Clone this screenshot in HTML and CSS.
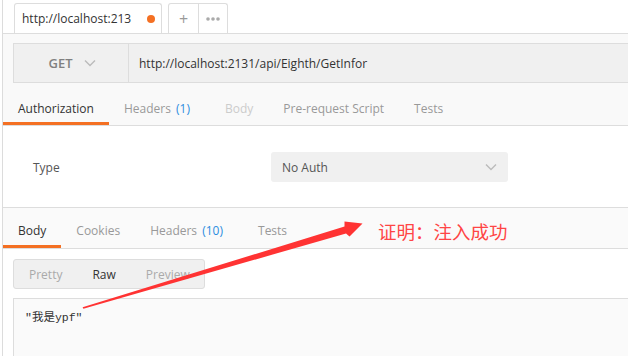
FILE: index.html
```html
<!DOCTYPE html>
<html lang="zh">
<head>
    <meta charset="UTF-8">
    <title>Postman</title>
    <link rel="stylesheet" href="styles.css">
</head>
<body>
    <div class="app">
        <div class="tabstrip">
            <div class="tab">
                <span class="tab-title">http://localhost:213</span>
                <span class="dot"></span>
            </div>
            <div class="tab-tools">
                <span class="tool">+</span>
                <span class="tool dots">
                    <svg width="14" height="4" viewBox="0 0 14 4"><circle cx="2" cy="2" r="1.8" fill="#aaa"/><circle cx="7" cy="2" r="1.8" fill="#aaa"/><circle cx="12" cy="2" r="1.8" fill="#aaa"/></svg>
                </span>
            </div>
        </div>

        <div class="request">
            <div class="urlbar">
                <div class="method">
                    GET
                    <svg width="12" height="8" viewBox="0 0 12 8"><path d="M1 1.5 L6 6.5 L11 1.5" fill="none" stroke="#bbb" stroke-width="1.4"/></svg>
                </div>
                <div class="url">http://localhost:2131/api/Eighth/GetInfor</div>
            </div>
        </div>

        <div class="tabs">
            <div class="tab-item active">Authorization</div>
            <div class="tab-item">Headers <span class="count">(1)</span></div>
            <div class="tab-item disabled">Body</div>
            <div class="tab-item">Pre-request Script</div>
            <div class="tab-item">Tests</div>
        </div>

        <div class="auth">
            <div class="auth-label">Type</div>
            <div class="select">
                <span>No Auth</span>
                <svg width="12" height="8" viewBox="0 0 12 8"><path d="M1 1.5 L6 6.5 L11 1.5" fill="none" stroke="#bbb" stroke-width="1.4"/></svg>
            </div>
        </div>

        <div class="tabs response-tabs">
            <div class="tab-item active">Body</div>
            <div class="tab-item">Cookies</div>
            <div class="tab-item">Headers <span class="count">(10)</span></div>
            <div class="tab-item">Tests</div>
        </div>

        <div class="view-switch">
            <span class="view">Pretty</span>
            <span class="view current">Raw</span>
            <span class="view">Preview</span>
        </div>

        <div class="response">"我是ypf"</div>
    </div>

    <!-- annotation drawn over the screenshot -->
    <svg class="arrow" width="628" height="356" viewBox="0 0 628 356">
        <polygon points="82.6,307.2 83.4,308.8 346,233.5 349.5,236.5 362.5,223.5 344.5,221.5 344.5,226.5" fill="#f33"/>
    </svg>
    <div class="note">证明：注入成功</div>
</body>
</html>
```

FILE: styles.css
```css
body {
    margin: 0;
    font-family: 'Open Sans', 'Noto Sans CJK SC', sans-serif;
    font-size: 12px;
    color: #333;
    background: #fff;
    overflow: hidden;
}

.app {
    margin-left: 2px;
    border-left: 1px solid #dcdcdc;
    height: 356px;
    overflow: hidden;
}

/* top tab strip */
.tabstrip {
    display: flex;
    align-items: flex-end;
    height: 33px;
    padding-left: 11px;
    border-bottom: 1px solid #ddd;
    gap: 6px;
}

.tab {
    box-sizing: border-box;
    width: 148px;
    height: 30px;
    display: flex;
    align-items: center;
    padding-left: 7px;
    background: #fff;
    border: 1px solid #ddd;
    border-bottom: none;
    border-radius: 3px 3px 0 0;
}

.tab-title {
    width: 112px;
    white-space: nowrap;
}

.dot {
    width: 8px;
    height: 8px;
    border-radius: 50%;
    background: #f47023;
    margin-left: 13px;
}

.tab-tools {
    display: flex;
    height: 30px;
    box-sizing: border-box;
    border: 1px solid #ddd;
    border-bottom: none;
    border-radius: 3px 3px 0 0;
}

.tool {
    width: 29px;
    display: flex;
    align-items: center;
    justify-content: center;
    color: #999;
    font-size: 16px;
    line-height: 16px;
}

.tool.dots {
    width: 28px;
    border-left: 1px solid #ddd;
}

/* url bar */
.request {
    background: #f9f9f9;
    padding: 9px 0 0 10px;
}

.urlbar {
    display: flex;
    height: 40px;
    box-sizing: border-box;
    background: #f0f0f0;
    border: 1px solid #ddd;
    border-right: none;
}

.method {
    width: 115px;
    border-right: 1px solid #ddd;
    display: flex;
    align-items: center;
    justify-content: center;
    gap: 11px;
    font-size: 13px;
    font-weight: 600;
    color: #808080;
    padding-left: 2px;
    box-sizing: border-box;
}

.url {
    display: flex;
    align-items: center;
    padding-left: 10px;
}

/* tab rows */
.tabs {
    display: flex;
    background: #f9f9f9;
    border-bottom: 1px solid #ddd;
}

.tab-item {
    padding: 18px 15px 5px;
    line-height: 16px;
    border-bottom: 3px solid transparent;
    color: #999;
    white-space: nowrap;
}

.tab-item.active {
    color: #333;
    border-bottom-color: #f47023;
}

.tab-item.disabled {
    color: #ccc;
}

.count {
    color: #2d8de0;
    margin-left: 2px;
    margin-right: 5px;
}

.response-tabs {
    background: #fafafa;
    border-top: 1px solid #ddd;
}

.response-tabs .tab-item {
    padding-top: 15px;
    padding-bottom: 6px;
}

/* auth */
.auth {
    display: flex;
    align-items: center;
    padding: 26px 0 25px 30px;
}

.auth-label {
    width: 238px;
    color: #555;
}

.select {
    box-sizing: border-box;
    width: 237px;
    height: 30px;
    display: flex;
    align-items: center;
    justify-content: space-between;
    padding: 0 11px;
    background: #f0f0f0;
    border-radius: 3px;
    color: #555;
}

/* response */
.view-switch {
    display: inline-flex;
    margin: 10px 0 0 10px;
    height: 30px;
    box-sizing: border-box;
    background: #f0f0f0;
    border: 1px solid #ddd;
    border-radius: 3px;
    width: 192px;
}

.view {
    display: flex;
    align-items: center;
    padding: 0 15px;
    color: #aaa;
}

.view.current {
    color: #333;
}

.response {
    margin: 9px 0 0 10px;
    height: 60px;
    box-sizing: border-box;
    background: #fafafa;
    border: 1px solid #ddd;
    border-right: none;
    border-bottom: none;
    padding: 12px 11px;
    font-family: 'Liberation Mono', 'Noto Sans CJK SC', monospace;
    font-size: 11.5px;
    line-height: 14px;
    color: #333;
}

/* red annotation */
.arrow {
    position: absolute;
    left: 0;
    top: 0;
}

.note {
    position: absolute;
    left: 378px;
    top: 218px;
    font-family: 'Noto Sans CJK SC', sans-serif;
    font-size: 18.5px;
    line-height: 26px;
    color: #ff4545;
}
```
